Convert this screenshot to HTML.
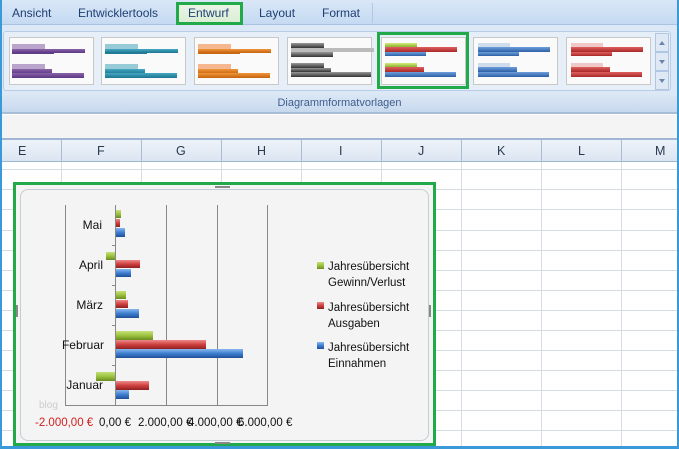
<!DOCTYPE html>
<html><head><meta charset="utf-8"><style>
*{margin:0;padding:0;box-sizing:border-box}
body{width:679px;height:449px;overflow:hidden;background:#fff;font-family:"Liberation Sans","DejaVu Sans",sans-serif;position:relative}
.abs{position:absolute}
.tab{position:absolute;top:6px;font-size:12px;color:#1f3f73}
</style></head><body>
<!-- tab bar -->
<div class="abs" style="left:0;top:0;width:679px;height:25px;background:linear-gradient(#d9e7f7,#c5daf2);border-bottom:1px solid #a9c4e3"></div>
<div class="tab" style="left:12px">Ansicht</div>
<div class="tab" style="left:78px">Entwicklertools</div>
<div class="abs" style="left:176px;top:2px;width:67px;height:23px;border:3px solid #22a94a;background:linear-gradient(#eaf4e6,#dbeed3)"></div>
<div class="tab" style="left:188px">Entwurf</div>
<div class="tab" style="left:259px">Layout</div>
<div class="tab" style="left:322px">Format</div>
<div class="abs" style="left:372px;top:3px;width:1px;height:20px;background:#b0c8e4"></div>
<!-- ribbon -->
<div class="abs" style="left:0;top:25px;width:679px;height:70px;background:#dce8f6"></div>
<div class="abs" style="left:3px;top:31px;width:668px;height:60px;background:#e6eef8;border:1px solid #b9cde6;border-radius:3px"></div>
<svg class="abs" style="left:0;top:25px" width="679" height="70">
 <defs>
  <linearGradient id="gp" x1="0" y1="0" x2="0" y2="1"><stop offset="0" stop-color="#8a62a8"/><stop offset="1" stop-color="#5a3882"/></linearGradient>
  <linearGradient id="gt" x1="0" y1="0" x2="0" y2="1"><stop offset="0" stop-color="#45a8c2"/><stop offset="1" stop-color="#1d7590"/></linearGradient>
  <linearGradient id="go" x1="0" y1="0" x2="0" y2="1"><stop offset="0" stop-color="#f0963a"/><stop offset="1" stop-color="#c5620e"/></linearGradient>
  <linearGradient id="gg" x1="0" y1="0" x2="0" y2="1"><stop offset="0" stop-color="#999"/><stop offset="1" stop-color="#333"/></linearGradient>
  <linearGradient id="gb" x1="0" y1="0" x2="0" y2="1"><stop offset="0" stop-color="#6ea0dc"/><stop offset="1" stop-color="#2d5fa6"/></linearGradient>
  <linearGradient id="gr" x1="0" y1="0" x2="0" y2="1"><stop offset="0" stop-color="#e06060"/><stop offset="1" stop-color="#a82828"/></linearGradient>
  <linearGradient id="gv" x1="0" y1="0" x2="0" y2="1"><stop offset="0" stop-color="#d4ec7a"/><stop offset="1" stop-color="#8cb030"/></linearGradient>
 </defs>
 <g fill="#fafafa" stroke="#c8c8c8">
  <rect x="9.5" y="12.5" width="84" height="47"/><rect x="101.5" y="12.5" width="84" height="47"/><rect x="194.5" y="12.5" width="84" height="47"/><rect x="287.5" y="12.5" width="84" height="47"/><rect x="381.5" y="12.5" width="84" height="47"/><rect x="473.5" y="12.5" width="84" height="47"/><rect x="566.5" y="12.5" width="84" height="47"/>
 </g>
 <!-- mono styles -->
 <g><rect x="12" y="19" width="33" height="5" fill="#b9a4cc"/><rect x="12" y="24" width="42" height="5" fill="url(#gp)"/><rect x="12" y="24" width="73" height="4" fill="url(#gp)"/><rect x="12" y="39" width="33" height="5" fill="#b9a4cc"/><rect x="12" y="44" width="40" height="5" fill="url(#gp)"/><rect x="12" y="48" width="72" height="5" fill="url(#gp)"/></g>
 <g transform="translate(93,0)"><rect x="12" y="19" width="33" height="5" fill="#98cbd8"/><rect x="12" y="24" width="42" height="5" fill="url(#gt)"/><rect x="12" y="24" width="73" height="4" fill="url(#gt)"/><rect x="12" y="39" width="33" height="5" fill="#98cbd8"/><rect x="12" y="44" width="40" height="5" fill="url(#gt)"/><rect x="12" y="48" width="72" height="5" fill="url(#gt)"/></g>
 <g transform="translate(186,0)"><rect x="12" y="19" width="33" height="5" fill="#f4b790"/><rect x="12" y="24" width="42" height="5" fill="url(#go)"/><rect x="12" y="24" width="73" height="4" fill="url(#go)"/><rect x="12" y="39" width="33" height="5" fill="#f4b790"/><rect x="12" y="44" width="40" height="5" fill="url(#go)"/><rect x="12" y="48" width="72" height="5" fill="url(#go)"/></g>
 <g transform="translate(279,0)"><rect x="12" y="18" width="33" height="5" fill="url(#gg)"/><rect x="12" y="23" width="83" height="4" fill="#bbb"/><rect x="12" y="27" width="42" height="5" fill="url(#gg)"/><rect x="12" y="38" width="33" height="5" fill="url(#gg)"/><rect x="12" y="43" width="40" height="4" fill="url(#gg)"/><rect x="12" y="47" width="80" height="5" fill="url(#gg)"/></g>
 <!-- selected multicolour -->
 <g><rect x="385" y="18" width="32" height="4" fill="url(#gv)"/><rect x="385" y="22" width="72" height="5" fill="url(#gr)"/><rect x="385" y="27" width="41" height="4" fill="url(#gb)"/><rect x="385" y="38" width="32" height="4" fill="url(#gv)"/><rect x="385" y="42" width="39" height="5" fill="url(#gr)"/><rect x="385" y="47" width="71" height="5" fill="url(#gb)"/></g>
 <g><rect x="478" y="18" width="32" height="4" fill="#cfdcec"/><rect x="478" y="22" width="72" height="5" fill="url(#gb)"/><rect x="478" y="27" width="41" height="4" fill="url(#gb)"/><rect x="478" y="38" width="32" height="4" fill="#cfdcec"/><rect x="478" y="42" width="39" height="5" fill="url(#gb)"/><rect x="478" y="47" width="71" height="5" fill="url(#gb)"/></g>
 <g><rect x="571" y="18" width="32" height="4" fill="#f0c8c8"/><rect x="571" y="22" width="72" height="5" fill="url(#gr)"/><rect x="571" y="27" width="41" height="4" fill="url(#gr)"/><rect x="571" y="38" width="32" height="4" fill="#f0c8c8"/><rect x="571" y="42" width="39" height="5" fill="url(#gr)"/><rect x="571" y="47" width="71" height="5" fill="url(#gr)"/></g>
 <rect x="378.5" y="8.5" width="89" height="54" fill="none" stroke="#22a94a" stroke-width="3"/>
 <!-- scroll -->
 <g fill="#dfe9f5" stroke="#b0c6e2"><rect x="655.5" y="8.5" width="13" height="18"/><rect x="655.5" y="27.5" width="13" height="18"/><rect x="655.5" y="46.5" width="13" height="18"/></g>
 <g fill="#6b86ad"><path d="M659 20h6l-3-4z"/><path d="M659 35h6l-3 4z"/><path d="M659 53h6M659 54h6l-3 4z"/></g>
</svg>
<div class="abs" style="left:0;top:95px;width:679px;height:19px;background:linear-gradient(#dae6f4,#c8d9ee);border-bottom:2px solid #a8bdd8;text-align:center;font-size:11px;color:#3d5d8f;padding-top:2px">Diagrammformatvorlagen</div>
<!-- formula bar -->
<div class="abs" style="left:0;top:114px;width:679px;height:26px;background:#f4f4f4;border-top:1px solid #fff;border-bottom:2px solid #a0b6d2"></div>
<!-- column headers -->
<div class="abs" style="left:0;top:140px;width:679px;height:22px;background:linear-gradient(#eef3fa,#dbe5f1);border-bottom:1px solid #9eb6ce"></div>
<div class="abs" style="top:144px;left:0;width:679px;font-size:12.5px;color:#2a3a50">
 <span class="abs" style="left:18px">E</span><span class="abs" style="left:97px">F</span><span class="abs" style="left:176px">G</span><span class="abs" style="left:257px">H</span><span class="abs" style="left:339px">I</span><span class="abs" style="left:418px">J</span><span class="abs" style="left:497px">K</span><span class="abs" style="left:578px">L</span><span class="abs" style="left:655px">M</span>
</div>
<svg class="abs" style="left:0;top:140px" width="679" height="309">
 <g stroke="#a9bcd2"><path d="M61.5 0v22M141.5 0v22M221.5 0v22M301.5 0v22M381.5 0v22M461.5 0v22M541.5 0v22M621.5 0v22"/></g>
 <g stroke="#d5dce6"><path d="M61.5 22v287M141.5 22v287M221.5 22v287M301.5 22v287M381.5 22v287M461.5 22v287M541.5 22v287M621.5 22v287"/>
 <path d="M0 29.5h679M0 49.5h679M0 69.5h679M0 90.5h679M0 110.5h679M0 130.5h679M0 150.5h679M0 170.5h679M0 190.5h679M0 210.5h679M0 230.5h679M0 250.5h679M0 270.5h679M0 290.5h679"/></g>
</svg>
<!-- outer blue frame -->
<div class="abs" style="left:0;top:0;width:679px;height:449px;border:2px solid #3a9ad9;border-top:none;border-bottom-width:3px"></div>
<!-- chart -->
<div class="abs" style="left:13px;top:182px;width:423px;height:264px;border:3px solid #22a94a;background:#f4f4f4"></div>
<div class="abs" style="left:20px;top:189px;width:409px;height:252px;border:1px solid #c4ccd4;border-radius:8px;background:#f4f4f4"></div>
<svg class="abs" style="left:0;top:0" width="679" height="449" font-family="Liberation Sans, DejaVu Sans, sans-serif">
 <defs>
  <linearGradient id="cv" x1="0" y1="0" x2="0" y2="1"><stop offset="0" stop-color="#c5e07a"/><stop offset=".5" stop-color="#9cc23e"/><stop offset="1" stop-color="#6a8c20"/></linearGradient>
  <linearGradient id="cr" x1="0" y1="0" x2="0" y2="1"><stop offset="0" stop-color="#ee8a8a"/><stop offset=".5" stop-color="#d04040"/><stop offset="1" stop-color="#902020"/></linearGradient>
  <linearGradient id="cb" x1="0" y1="0" x2="0" y2="1"><stop offset="0" stop-color="#8ab8ee"/><stop offset=".5" stop-color="#3d7ed0"/><stop offset="1" stop-color="#1f4f98"/></linearGradient>
 </defs>
 <g stroke="#888"><path d="M65.5 205v200M166.5 205v200M217.5 205v200M267.5 205v200M65 405.5h203"/></g>
 <g stroke="#888"><path d="M115.5 205v200M112 245.5h4M112 285.5h4M112 325.5h4M112 365.5h4"/></g>
 <g>
  <rect x="116" y="210" width="5" height="8" fill="url(#cv)"/><rect x="116" y="219" width="4" height="8" fill="url(#cr)"/><rect x="116" y="228" width="9" height="9" fill="url(#cb)"/>
  <rect x="106" y="252" width="9" height="8" fill="url(#cv)"/><rect x="116" y="260" width="24" height="8" fill="url(#cr)"/><rect x="116" y="269" width="15" height="8" fill="url(#cb)"/>
  <rect x="116" y="291" width="10" height="8" fill="url(#cv)"/><rect x="116" y="300" width="12" height="8" fill="url(#cr)"/><rect x="116" y="309" width="23" height="9" fill="url(#cb)"/>
  <rect x="116" y="331" width="37" height="9" fill="url(#cv)"/><rect x="116" y="340" width="90" height="9" fill="url(#cr)"/><rect x="116" y="349" width="127" height="9" fill="url(#cb)"/>
  <rect x="96" y="372" width="19" height="9" fill="url(#cv)"/><rect x="116" y="381" width="33" height="9" fill="url(#cr)"/><rect x="116" y="390" width="13" height="9" fill="url(#cb)"/>
 </g>
 <g font-size="12" fill="#111" text-anchor="end">
  <text x="102" y="229">Mai</text><text x="103" y="269">April</text><text x="103" y="309">März</text><text x="104" y="349">Februar</text><text x="103" y="389">Januar</text>
 </g>
 <text x="39" y="408" font-size="10" fill="#ccc">blog</text>
 <g font-size="11.5">
  <text x="35" y="426" fill="#d02020">-2.000,00 €</text><text x="99" y="426" fill="#111">0,00 €</text><text x="138" y="426" fill="#111">2.000,00 €</text><text x="188" y="426" fill="#111">4.000,00 €</text><text x="238" y="426" fill="#111">6.000,00 €</text>
 </g>
 <rect x="317" y="262" width="7" height="7" fill="url(#cv)"/><rect x="317" y="302" width="7" height="7" fill="url(#cr)"/><rect x="317" y="342" width="7" height="7" fill="url(#cb)"/>
 <g font-size="11.5" fill="#111">
  <text x="328" y="270">Jahresübersicht</text><text x="328" y="286">Gewinn/Verlust</text>
  <text x="328" y="311">Jahresübersicht</text><text x="328" y="327">Ausgaben</text>
  <text x="328" y="351">Jahresübersicht</text><text x="328" y="367">Einnahmen</text>
 </g>
 <g fill="#888"><rect x="215" y="186" width="15" height="2"/><rect x="215" y="442" width="15" height="2"/><rect x="16" y="305" width="2" height="12"/><rect x="429" y="305" width="2" height="12"/></g>
</svg>
</body></html>
